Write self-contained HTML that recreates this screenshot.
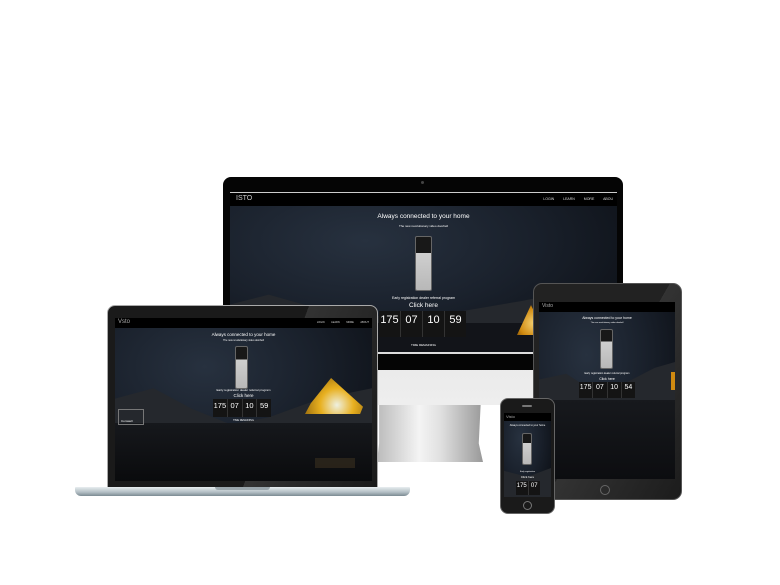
<!DOCTYPE html>
<html><head><meta charset="utf-8"><style>
*{margin:0;padding:0;box-sizing:border-box}
body{width:780px;height:585px;background:#fff;position:relative;overflow:hidden;font-family:"Liberation Sans",sans-serif;color:#fff}
.a{position:absolute}
.sky{background:radial-gradient(ellipse at 35% 30%,#27313f 0%,#1a212c 45%,#0f131a 80%)}
.mt{background:#25282d}
.nav{background:#000;left:0;right:0;top:0}
.t{text-align:center;left:0;right:0;white-space:nowrap}
.bell{background:linear-gradient(#181818 0 30%,#cfcfcf 30%,#b8b8b8);border:1px solid #666;border-radius:2px}
.cd{background:#141414;display:flex}
.cd div{flex:1;border-right:1px solid #333;text-align:center}
</style></head><body>

<!-- MONITOR -->
<div class="a" style="left:377px;top:400px;width:106px;height:62px;background:linear-gradient(90deg,#bbb,#f4f4f4 40%,#e0e0e0 60%,#999);clip-path:polygon(2% 0,98% 0,96% 70%,100% 100%,0 100%,2% 70%)"></div>
<div class="a" style="left:223px;top:177px;width:400px;height:228px;border-radius:8px 8px 4px 4px;background:linear-gradient(#d8d8d8,#eee)"></div>
<div class="a" style="left:223px;top:177px;width:400px;height:193px;border-radius:8px 8px 0 0;background:#050505"></div>
<div class="a" style="left:421px;top:181px;width:3px;height:3px;border-radius:50%;background:#444"></div>
<div class="a sky" style="left:230px;top:192px;width:387px;height:161px;overflow:hidden;border-top:1px solid #ccc">
 <div class="a nav" style="height:13px"></div>
 <div class="a" style="left:6px;top:2px;font-size:7px;color:#ccc">ISTO</div>
 <div class="a" style="right:4px;top:4px;font-size:3.5px;color:#ddd;word-spacing:8px">LOGIN LEARN&nbsp;MORE ABOU</div>
 <div class="a mt" style="left:0;top:95px;width:387px;height:66px;clip-path:polygon(0 25%,10% 10%,22% 30%,35% 40%,50% 50%,60% 35%,75% 20%,88% 5%,100% 0,100% 100%,0 100%)"></div>
 <div class="a" style="left:0;top:130px;width:387px;height:31px;background:#121419"></div>
 <div class="a" style="left:287px;top:112px;width:28px;height:30px;background:radial-gradient(circle at 60% 60%,#f5d070,#d08a10 60%,#6a4005);clip-path:polygon(50% 0,100% 100%,0 100%)"></div>
 <div class="a t" style="top:20px;font-size:6.5px">Always connected to your home</div>
 <div class="a t" style="top:31px;font-size:3px">The new revolutionary video doorbell</div>
 <div class="a bell" style="left:185px;top:43px;width:17px;height:55px"></div>
 <div class="a t" style="top:103px;font-size:3.5px">Early registration dealer referral program</div>
 <div class="a t" style="top:109px;font-size:6.5px">Click here</div>
 <div class="a cd" style="left:149px;top:118px;width:87px;height:26px">
  <div style="font-size:11px;padding-top:3px">175</div><div style="font-size:11px;padding-top:3px">07</div><div style="font-size:11px;padding-top:3px">10</div><div style="font-size:11px;padding-top:3px;border:0">59</div></div>
 <div class="a t" style="top:150px;font-size:3px">TIME REMAINING</div>
</div>
<div class="a" style="left:230px;top:352px;width:387px;height:1.5px;background:#ddd"></div>

<!-- LAPTOP -->
<div class="a" style="left:107px;top:305px;width:271px;height:183px;border-radius:8px 8px 0 0;background:linear-gradient(110deg,#1a1a1a 0 60%,#333 60%,#1a1a1a);border:1px solid #aaa"></div>
<div class="a sky" style="left:115px;top:318px;width:257px;height:163px;overflow:hidden">
 <div class="a nav" style="height:10px"></div>
 <div class="a" style="left:3px;top:1px;font-size:6px;color:#aaa">Vsto</div>
 <div class="a" style="right:3px;top:3px;font-size:2.5px;color:#ddd;word-spacing:6px">LOGIN LEARN&nbsp;MORE ABOUT</div>
 <div class="a mt" style="left:0;top:60px;width:257px;height:103px;clip-path:polygon(0 20%,15% 10%,30% 30%,45% 45%,60% 38%,80% 20%,100% 10%,100% 100%,0 100%)"></div>
 <div class="a" style="left:0;top:105px;width:257px;height:58px;background:linear-gradient(#16181c,#0a0b0d)"></div>
 <div class="a" style="left:190px;top:60px;width:58px;height:36px;background:radial-gradient(circle at 55% 75%,#eef0e0,#e8b020 40%,#7a5005);clip-path:polygon(45% 0,100% 80%,95% 100%,0 100%,10% 70%)"></div>
 <div class="a" style="left:200px;top:140px;width:40px;height:10px;background:#3a3020;opacity:.6"></div>
 <div class="a t" style="top:14px;font-size:4.5px">Always connected to your home</div>
 <div class="a t" style="top:21px;font-size:2.5px">The new revolutionary video doorbell</div>
 <div class="a bell" style="left:120px;top:28px;width:13px;height:43px"></div>
 <div class="a t" style="top:70px;font-size:3px">Early registration dealer referral program</div>
 <div class="a t" style="top:75px;font-size:4.5px">Click here</div>
 <div class="a cd" style="left:98px;top:81px;width:58px;height:18px">
  <div style="font-size:7.5px;padding-top:2px">175</div><div style="font-size:7.5px;padding-top:2px">07</div><div style="font-size:7.5px;padding-top:2px">10</div><div style="font-size:7.5px;padding-top:2px;border:0">59</div></div>
 <div class="a t" style="top:101px;font-size:2.5px">TIME REMAINING</div>
 <div class="a" style="left:3px;top:91px;width:26px;height:16px;border:1px solid #777;font-size:3px;padding-top:9px;padding-left:2px">Comwell</div>
</div>
<div class="a" style="left:75px;top:487px;width:335px;height:9px;border-radius:1px 1px 6px 6px;background:linear-gradient(#e8eef0,#b0bcc2 60%,#7a8a92)"></div>
<div class="a" style="left:215px;top:487px;width:55px;height:3px;background:#9aa6ac;border-radius:0 0 3px 3px"></div>

<!-- TABLET -->
<div class="a" style="left:533px;top:283px;width:149px;height:217px;border-radius:9px;background:linear-gradient(120deg,#222 0 50%,#333 50%,#1c1c1c);border:1px solid #555"></div>
<div class="a sky" style="left:539px;top:302px;width:136px;height:177px;overflow:hidden">
 <div class="a nav" style="height:10px"></div>
 <div class="a" style="left:3px;top:1px;font-size:5px;color:#aaa">Visto</div>
 <div class="a mt" style="left:0;top:60px;width:136px;height:117px;clip-path:polygon(0 15%,20% 10%,40% 25%,60% 20%,85% 5%,100% 0,100% 100%,0 100%)"></div>
 <div class="a" style="left:0;top:98px;width:136px;height:79px;background:linear-gradient(#17191d,#0c0d10)"></div>
 <div class="a" style="left:132px;top:70px;width:6px;height:18px;background:#d08a10"></div>
 <div class="a t" style="top:14px;font-size:3.5px">Always connected to your home</div>
 <div class="a t" style="top:20px;font-size:2px">The new revolutionary video doorbell</div>
 <div class="a bell" style="left:61px;top:27px;width:13px;height:40px"></div>
 <div class="a t" style="top:70px;font-size:2.5px">Early registration dealer referral program</div>
 <div class="a t" style="top:75px;font-size:3.5px">Click here</div>
 <div class="a cd" style="left:40px;top:80px;width:56px;height:16px">
  <div style="font-size:7px;padding-top:2px">175</div><div style="font-size:7px;padding-top:2px">07</div><div style="font-size:7px;padding-top:2px">10</div><div style="font-size:7px;padding-top:2px;border:0">54</div></div>
</div>
<div class="a" style="left:600px;top:485px;width:10px;height:10px;border-radius:50%;border:1px solid #666"></div>

<!-- PHONE -->
<div class="a" style="left:500px;top:398px;width:55px;height:116px;border-radius:8px;background:#1a1a1a;border:1px solid #666"></div>
<div class="a" style="left:522px;top:405px;width:10px;height:2px;background:#777;border-radius:1px"></div>
<div class="a sky" style="left:504px;top:413px;width:47px;height:84px;overflow:hidden">
 <div class="a nav" style="height:8px"></div>
 <div class="a" style="left:2px;top:1px;font-size:4px;color:#aaa">Visto</div>
 <div class="a t" style="top:11px;font-size:2.5px">Always connected to your home</div>
 <div class="a bell" style="left:18px;top:20px;width:10px;height:32px"></div>
 <div class="a mt" style="left:0;top:55px;width:47px;height:29px;clip-path:polygon(0 10%,50% 30%,100% 0,100% 100%,0 100%)"></div>
 <div class="a t" style="top:58px;font-size:2px">Early registration</div>
 <div class="a t" style="top:62px;font-size:3px">Click here</div>
 <div class="a cd" style="left:12px;top:68px;width:24px;height:14px">
  <div style="font-size:6px;padding-top:2px">175</div><div style="font-size:6px;padding-top:2px;border:0">07</div></div>
</div>
<div class="a" style="left:523px;top:501px;width:9px;height:9px;border-radius:50%;border:1px solid #777"></div>
</body></html>
